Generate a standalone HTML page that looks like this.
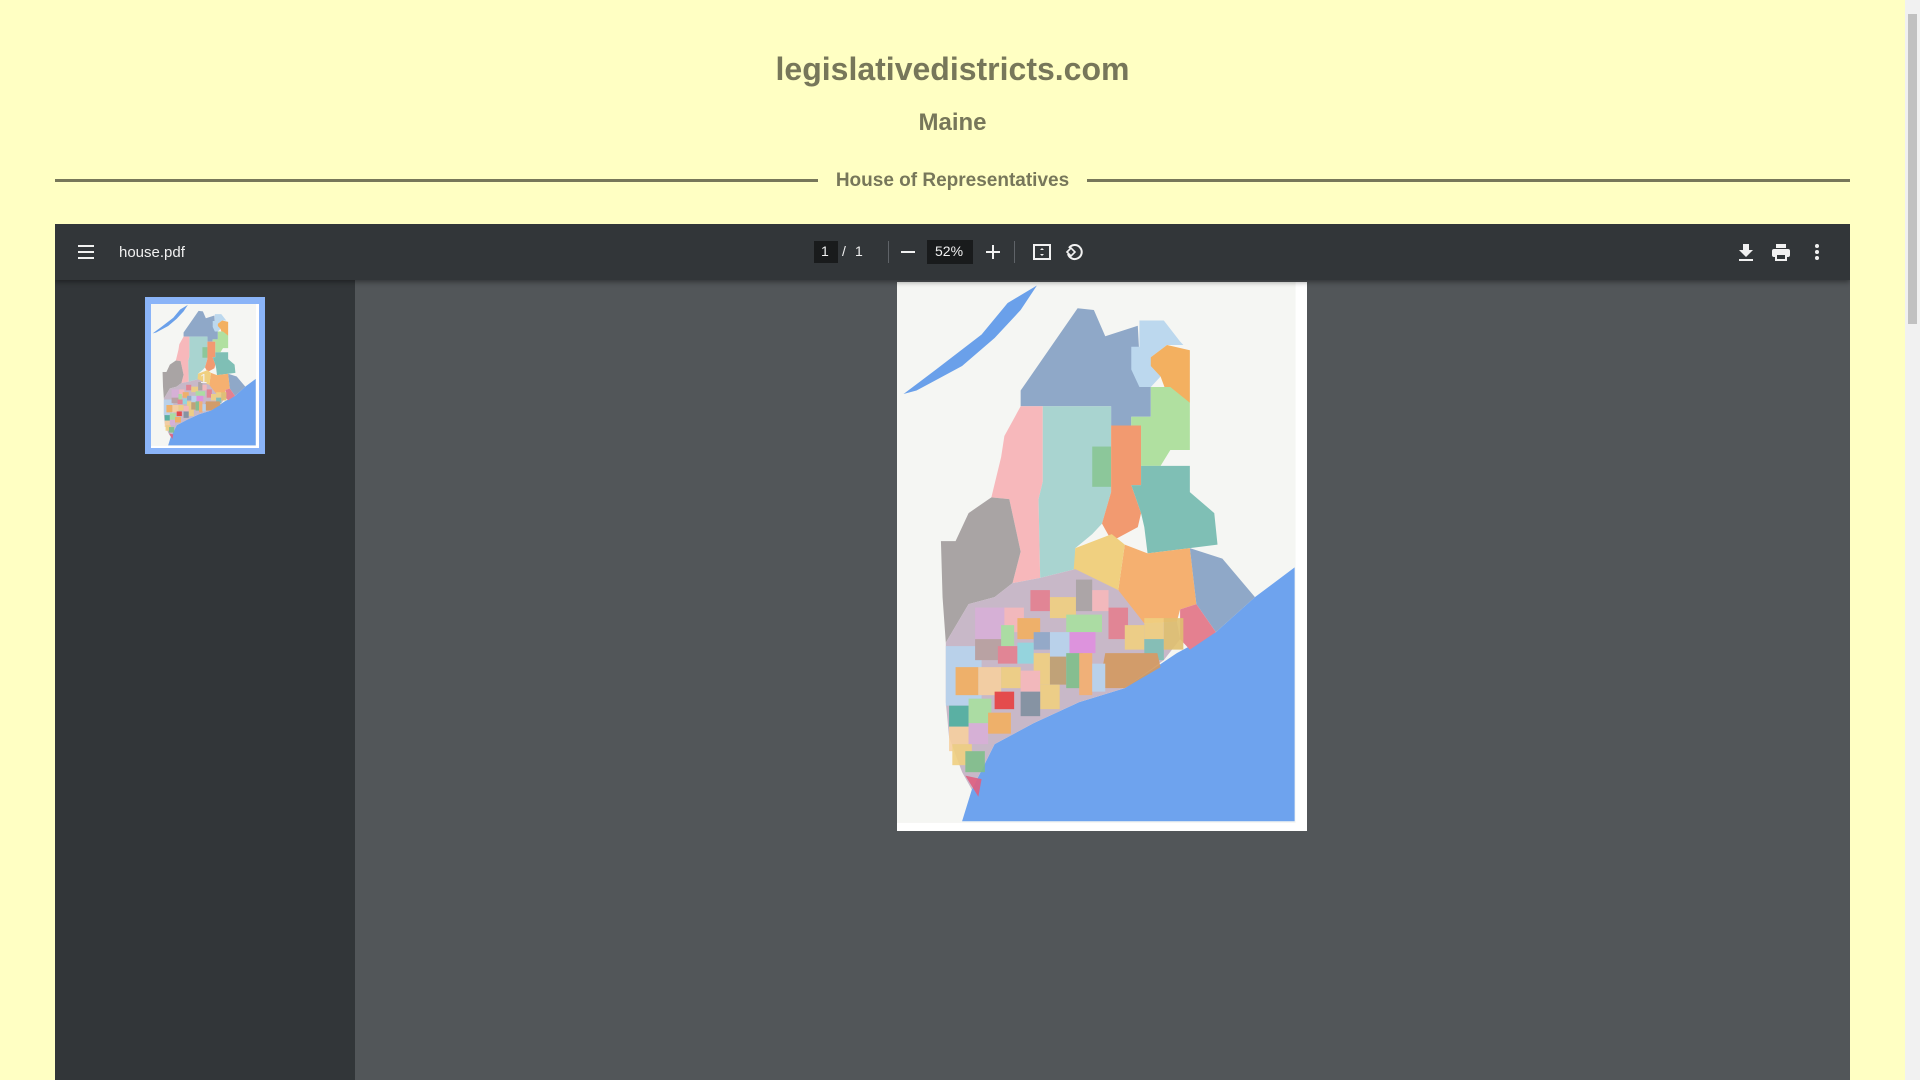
<!DOCTYPE html>
<html><head><meta charset="utf-8"><style>
*{margin:0;padding:0;box-sizing:border-box}
html,body{width:1920px;height:1080px;overflow:hidden;background:#ffffc3;font-family:"Liberation Sans",sans-serif}
.abs{position:absolute}
h1{position:absolute;left:0;width:1905px;top:51px;text-align:center;font-size:32px;font-weight:bold;color:#77775a}
h2{position:absolute;left:0;width:1905px;top:109px;text-align:center;font-size:24px;font-weight:bold;color:#77775a}
.rule{position:absolute;left:55px;width:1795px;top:179px;height:3px;background:#77775a}
.sub{position:absolute;left:0;width:1905px;top:170px;text-align:center}
.sub span{background:#ffffc3;padding:0 18px;font-size:19px;font-weight:bold;color:#77775a}
.viewer{position:absolute;left:55px;top:224px;width:1795px;height:856px;background:#525659;overflow:hidden}
.side{position:absolute;left:0;top:56px;width:300px;height:800px;background:#323639}
.tb{position:absolute;left:0;top:0;width:1795px;height:56px;background:#323639;box-shadow:0 2px 5px rgba(0,0,0,.4);z-index:2;color:#f1f1f1}
.t{position:absolute;font-size:15px;color:#f1f1f1}
.sb{position:absolute;left:1905px;top:0;width:15px;height:1080px;background:#f1f1f1}
</style></head><body>
<h1>legislativedistricts.com</h1>
<h2>Maine</h2>
<div class="rule"></div>
<div class="sub"><span>House of Representatives</span></div>
<svg width="0" height="0" style="position:absolute"><defs><g id="map">
<rect width="1260" height="1568" fill="#fff"/>
<rect x="0" y="0" width="1225" height="1545" fill="#f5f6f3"/>
<path d="M20 320 L120 250 L260 150 L340 60 L430 10 L380 80 L300 160 L200 240 L60 310Z" fill="#6aa0ea"/>
<path d="M1222 815 L1222 1540 L200 1540 L230 1450 L300 1320 L420 1260 L560 1200 L700 1160 L860 1060 L980 1000 L1100 900Z" fill="#6ea3ee"/>
<path d="M380 355 L380 310 L555 75 L605 80 L640 155 L740 125 L750 300 L780 300 L780 385 L720 385 L720 410 L658 410 L658 355Z" fill="#8fa8c8"/>
<path d="M745 110 L820 110 L870 170 L880 180 L830 180 L780 215 L810 270 L780 300 L745 300 L720 250 L720 185 L745 185Z" fill="#bcd8ee"/>
<path d="M830 180 L900 195 L900 345 L840 345 L810 270 L780 240 L780 215Z" fill="#f3b060"/>
<path d="M720 385 L780 385 L780 300 L840 300 L900 345 L900 480 L840 480 L810 525 L750 525 L750 410 L720 410Z" fill="#b0e0a0"/>
<path d="M380 355 L448 355 L448 570 L435 620 L440 845 L355 860 L380 770 L345 620 L290 615 L320 500 L330 440Z" fill="#f7b8bb"/>
<path d="M448 355 L658 355 L658 600 L630 690 L600 720 L548 760 L548 820 L440 845 L435 620 L448 570Z" fill="#a9d4d0"/>
<rect x="600" y="470" width="58" height="115" fill="#8cc79a"/>
<path d="M658 410 L750 410 L750 580 L720 580 L750 660 L740 700 L660 740 L630 690 L658 600Z" fill="#f29a70"/>
<path d="M750 525 L900 525 L900 600 L975 660 L985 750 L900 760 L770 775 L760 700 L750 660 L720 580 L750 580Z" fill="#7fbfb5"/>
<path d="M135 740 L180 740 L220 660 L290 615 L345 620 L380 770 L355 860 L300 900 L220 920 L150 1030 L140 900Z" fill="#a9a4a4"/>
<path d="M700 750 L770 775 L900 760 L920 920 L870 935 L860 970 L760 975 L700 940 L680 880Z" fill="#f5b070"/>
<path d="M900 760 L1000 790 L1100 900 L980 1000 L920 920Z" fill="#8fa8c8"/>
<path d="M870 935 L920 920 L980 1000 L900 1050 L870 1020Z" fill="#e48090"/>
<path d="M548 760 L660 720 L700 750 L680 880 L620 900 L540 860Z" fill="#f0d080"/>
<path d="M150 1030 L220 920 L300 900 L355 860 L440 845 L548 820 L680 880 L760 975 L860 970 L870 1020 L820 1080 L700 1160 L560 1200 L420 1260 L300 1320 L230 1450 L200 1400 L160 1300 L150 1200Z" fill="#c8b8c8"/>
<g opacity=".9">
<rect x="150" y="1040" width="110" height="170" fill="#b8d4ee"/>
<rect x="180" y="1100" width="70" height="80" fill="#f3b060"/>
<rect x="240" y="930" width="100" height="90" fill="#d8b0d8"/>
<rect x="330" y="930" width="60" height="70" fill="#f7b8bb"/>
<rect x="370" y="960" width="70" height="60" fill="#f3b060"/>
<rect x="410" y="880" width="60" height="60" fill="#e48090"/>
<rect x="470" y="900" width="80" height="60" fill="#f0d080"/>
<rect x="520" y="950" width="110" height="50" fill="#a8e0a0"/>
<rect x="550" y="850" width="50" height="90" fill="#a9a4a4"/>
<rect x="600" y="880" width="50" height="60" fill="#f7b8bb"/>
<rect x="650" y="930" width="60" height="90" fill="#e48090"/>
<rect x="700" y="980" width="60" height="70" fill="#f0d080"/>
<rect x="760" y="960" width="60" height="60" fill="#f0d080"/>
<rect x="760" y="1020" width="60" height="60" fill="#7fbfb5"/>
<rect x="820" y="960" width="60" height="90" fill="#e0c070"/>
<path d="M640 1060 L800 1060 L810 1100 L700 1160 L620 1160Z" fill="#d49a60"/>
<rect x="530" y="1000" width="80" height="60" fill="#e090e0"/>
<rect x="470" y="1000" width="60" height="70" fill="#b8d4ee"/>
<rect x="420" y="1000" width="50" height="50" fill="#8fa8c8"/>
<rect x="320" y="980" width="40" height="60" fill="#a8e0a0"/>
<rect x="240" y="1020" width="80" height="60" fill="#b8a0a0"/>
<rect x="310" y="1040" width="60" height="50" fill="#e48090"/>
<rect x="370" y="1030" width="50" height="60" fill="#90d8e0"/>
<rect x="420" y="1060" width="50" height="90" fill="#f0d080"/>
<rect x="470" y="1070" width="50" height="80" fill="#c0a070"/>
<rect x="520" y="1060" width="50" height="100" fill="#7fbf8a"/>
<rect x="560" y="1060" width="40" height="120" fill="#f5b070"/>
<rect x="600" y="1090" width="40" height="80" fill="#b8d4ee"/>
<rect x="250" y="1100" width="70" height="80" fill="#f7d0a0"/>
<rect x="320" y="1100" width="60" height="60" fill="#f0d080"/>
<rect x="380" y="1110" width="60" height="60" fill="#f7b8bb"/>
<rect x="440" y="1150" width="60" height="70" fill="#f0d080"/>
<rect x="380" y="1170" width="60" height="70" fill="#7f8fa0"/>
<rect x="300" y="1170" width="60" height="50" fill="#e84040"/>
<rect x="160" y="1210" width="60" height="60" fill="#4fb0a0"/>
<rect x="220" y="1190" width="70" height="80" fill="#a8e0a0"/>
<rect x="160" y="1270" width="60" height="70" fill="#f7d0a0"/>
<rect x="220" y="1260" width="60" height="60" fill="#d8b0d8"/>
<rect x="280" y="1230" width="70" height="60" fill="#f3b060"/>
<rect x="170" y="1320" width="60" height="60" fill="#f0d080"/>
<rect x="210" y="1340" width="60" height="60" fill="#7fbf8a"/>
<path d="M210 1410 L250 1470 L260 1420Z" fill="#e06080"/>
</g>
</g></defs></svg>
<div class="viewer">
<div class="side">
<div class="abs" style="left:90px;top:17px;width:120px;height:157px;background:#8ab4f8"></div>
<svg class="abs" style="left:96px;top:24px" width="108" height="144" viewBox="0 0 1260 1568" preserveAspectRatio="none"><use href="#map"/></svg>
<div class="t" style="left:145px;top:91px;font-size:13px">1</div>
</div>
<svg class="abs" style="left:842px;top:58px" width="410" height="549" viewBox="0 0 1260 1568" preserveAspectRatio="none"><use href="#map"/></svg>
<div class="tb">
<svg class="abs" style="left:22px;top:19px" width="18" height="18" viewBox="0 0 18 18"><path d="M1 3h16M1 9h16M1 15h16" stroke="#f1f1f1" stroke-width="2"/></svg>
<div class="t" style="left:64px;top:20px">house.pdf</div>
<div class="abs" style="left:759px;top:17px;width:24px;height:22px;background:#191b1c"></div>
<div class="t" style="left:766px;top:19px;font-size:14px">1</div>
<div class="t" style="left:787px;top:19px;font-size:14px">/</div>
<div class="t" style="left:800px;top:19px;font-size:14px">1</div>
<div class="abs" style="left:833px;top:17px;width:1px;height:22px;background:#5f6368"></div>
<div class="abs" style="left:846px;top:27px;width:14px;height:2px;background:#f1f1f1"></div>
<div class="abs" style="left:872px;top:16px;width:46px;height:24px;background:#191b1c"></div>
<div class="t" style="left:880px;top:19px;font-size:14px">52%</div>
<div class="abs" style="left:931px;top:27px;width:14px;height:2px;background:#f1f1f1"></div>
<div class="abs" style="left:937px;top:21px;width:2px;height:14px;background:#f1f1f1"></div>
<div class="abs" style="left:959px;top:17px;width:1px;height:22px;background:#5f6368"></div>
<svg class="abs" style="left:977px;top:18px" width="20" height="20" viewBox="0 0 20 20"><rect x="2" y="3" width="16" height="14" fill="none" stroke="#f1f1f1" stroke-width="2"/><path d="M10 6l-2 2h4zM10 14l-2-2h4z" fill="#f1f1f1"/></svg>
<svg class="abs" style="left:1009px;top:18px" width="20" height="20" viewBox="0 0 20 20"><path d="M5 6 A7 7 0 1 1 4 12" fill="none" stroke="#f1f1f1" stroke-width="2"/><path d="M3 10l4-4 4 4-4 4z" fill="none" stroke="#f1f1f1" stroke-width="1.6"/></svg>
<svg class="abs" style="left:1682px;top:18px" width="18" height="20" viewBox="0 0 18 20"><path d="M6 2h6v6h4l-7 7-7-7h4z" fill="#f1f1f1"/><rect x="2" y="17" width="14" height="2" fill="#f1f1f1"/></svg>
<svg class="abs" style="left:1716px;top:18px" width="20" height="20" viewBox="0 0 20 20"><rect x="5" y="2" width="10" height="4" fill="#f1f1f1"/><rect x="1" y="7" width="18" height="8" rx="2" fill="#f1f1f1"/><rect x="5" y="12" width="10" height="6" fill="#323639" stroke="#f1f1f1" stroke-width="2"/></svg>
<svg class="abs" style="left:1758px;top:18px" width="8" height="20" viewBox="0 0 8 20"><circle cx="4" cy="4" r="2" fill="#f1f1f1"/><circle cx="4" cy="10" r="2" fill="#f1f1f1"/><circle cx="4" cy="16" r="2" fill="#f1f1f1"/></svg>
</div>
</div>
<div class="sb"><div class="abs" style="left:3px;top:14px;width:9px;height:310px;background:#c1c1c1"></div></div>
</body></html>
